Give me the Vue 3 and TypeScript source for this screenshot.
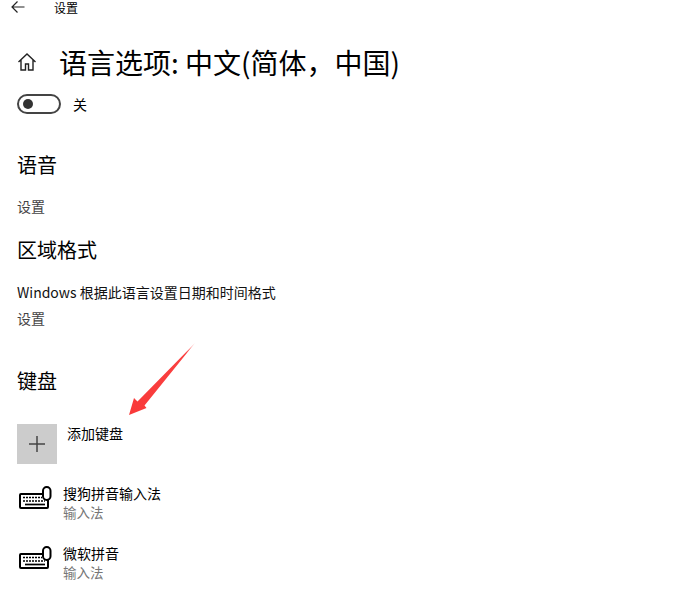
<template>
  <div class="settings">
    <header class="topbar">
      <svg class="back" width="16" height="16" viewBox="0 0 16 16" fill="none" stroke="#222" stroke-width="1.200">
        <path d="M1 7h12.500M6.500 1.500 1 7l5.500 5.500" />
      </svg>
      <span class="topbar__title">设置</span>
    </header>

    <div class="title-row">
      <svg class="home" width="20" height="20" viewBox="0 0 20 20" fill="none" stroke="#222" stroke-width="1.400">
        <path d="M1.500 10 10 2l8.500 8M4 8v10h4.500v-6h3v6H16V8" />
      </svg>
      <h1 class="title">语言选项: 中文(简体，中国)</h1>
    </div>

    <div class="toggle-row">
      <span class="toggle"><span class="toggle__knob" /></span>
      <span class="toggle-label">关</span>
    </div>

    <h2 class="heading heading--speech">语音</h2>
    <a class="link link--speech">设置</a>

    <h2 class="heading heading--region">区域格式</h2>
    <p class="desc">Windows 根据此语言设置日期和时间格式</p>
    <a class="link link--region">设置</a>

    <h2 class="heading heading--keyboard">键盘</h2>
    <div class="add-row">
      <span class="add-row__btn">
        <svg width="16" height="16" viewBox="0 0 16 16" stroke="#444" stroke-width="1.500">
          <path d="M8 0v16M0 8h16" />
        </svg>
      </span>
      <span class="add-row__label">添加键盘</span>
    </div>

    <div v-for="item in keyboards" :key="item" class="kb">
      <svg class="kb__icon" width="33" height="24" viewBox="0 0 33 24" fill="none" stroke="#000">
        <path stroke-width="2" d="M25 8H2a1 1 0 0 0-1 1v12a1 1 0 0 0 1 1h26a1 1 0 0 0 1-1V14" />
        <rect x="24" y="1" width="7.500" height="13" rx="3.700" stroke-width="2" fill="#fff" />
        <path stroke-width="1.700" stroke-dasharray="2 1" d="M4 11.500h19M4 15h22" />
        <path stroke-width="1.700" d="M6 18.500h20" />
      </svg>
      <div class="kb__text">
        <div class="kb__name">{{ item }}</div>
        <div class="kb__type">输入法</div>
      </div>
    </div>

    <svg class="arrow" width="70" height="76" viewBox="0 0 70 76">
      <defs>
        <linearGradient id="arrowFade" x1="1" y1="0" x2="0" y2="1">
          <stop offset="0" stop-color="#ff3b3b" stop-opacity="0.3" />
          <stop offset="0.14" stop-color="#fa4040" />
          <stop offset="1" stop-color="#f93a3a" />
        </linearGradient>
      </defs>
      <path fill="url(#arrowFade)" d="M68 2 17.500 64.500 19.500 67 2 74 7 57l3.500 3.500Z" />
    </svg>
  </div>
</template>

<script setup lang="ts">
const keyboards: string[] = ['搜狗拼音输入法', '微软拼音']
</script>

<style>
html, body { background: #fff; }
</style>

<style scoped>
.settings { position: relative; width: 685px; height: 592px; overflow: hidden; padding-left: 17px; box-sizing: border-box; color: #000; font-family: "Noto Sans CJK SC", "Liberation Sans", sans-serif; font-size: 14px; }
.topbar { display: flex; align-items: center; height: 16px; }
.back { margin-left: -6px; }
.topbar__title { margin-left: 27px; font-size: 12px; line-height: 16px; }
.title-row { display: flex; align-items: center; margin-top: 23px; height: 46px; }
.home { margin-right: 22px; }
.title { margin: 0; font-size: 28px; font-weight: 400; line-height: 46px; white-space: nowrap; }
.toggle-row { display: flex; align-items: center; margin-top: 9px; height: 20px; }
.toggle { display: flex; align-items: center; width: 44px; height: 20px; box-sizing: border-box; border: 2px solid #444; border-radius: 10px; padding-left: 4px; }
.toggle__knob { width: 10px; height: 10px; border-radius: 50%; background: #333; }
.toggle-label { margin-left: 12px; font-size: 14px; }
.heading { margin: 0; font-size: 20px; font-weight: 400; line-height: 28px; }
.heading--speech { margin-top: 37px; }
.link { display: block; color: #444; line-height: 20px; }
.link--speech { margin-top: 17px; }
.heading--region { margin-top: 20px; }
.desc { margin: 18px 0 0; line-height: 20px; color: #111; }
.link--region { margin-top: 6px; }
.heading--keyboard { margin-top: 39px; }
.add-row { display: flex; align-items: flex-start; margin-top: 29px; height: 40px; }
.add-row__btn { display: flex; align-items: center; justify-content: center; width: 40px; height: 40px; background: #ccc; }
.add-row__label { margin: -1px 0 0 10px; line-height: 20px; }
.kb { display: flex; align-items: flex-start; height: 60px; }
.add-row + .kb { margin-top: 19px; }
.kb__icon { margin: 3px 0 0 2px; }
.kb__text { margin-left: 11px; }
.kb__name { line-height: 20px; }
.kb__type { color: #777; font-size: 13.500px; line-height: 18px; }
.arrow { position: absolute; left: 127px; top: 341px; }
</style>
